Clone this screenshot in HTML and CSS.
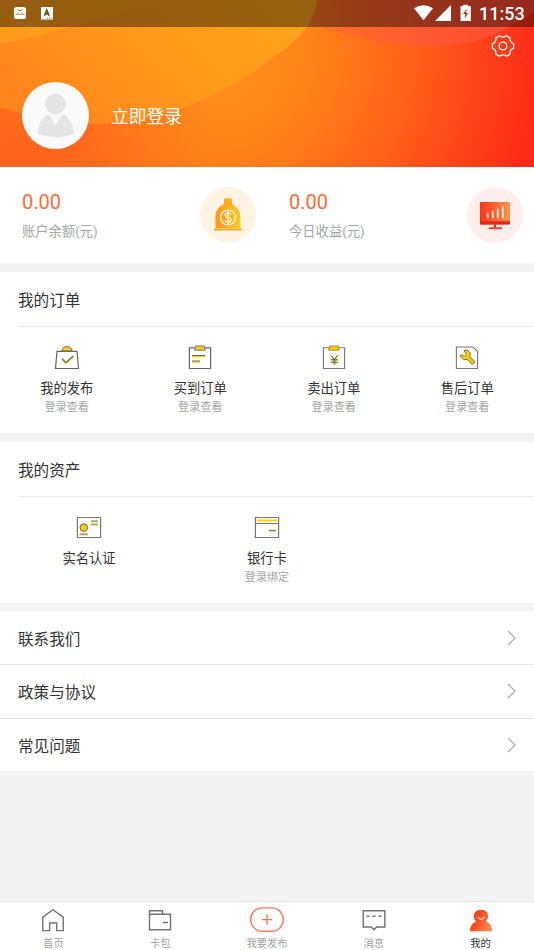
FILE: index.html
```html
<!DOCTYPE html>
<html lang="zh-CN">
<head>
<meta charset="utf-8">
<title>我的</title>
<link rel="stylesheet" href="styles.css">
</head>
<body>
<div class="app">
  <header class="hero">
    <svg class="hero-bg" viewBox="0 0 534 167" preserveAspectRatio="none">
      <defs>
        <radialGradient id="base" gradientUnits="userSpaceOnUse" cx="210" cy="50" r="335"><stop offset="0" stop-color="#ff931b"/><stop offset=".3" stop-color="#ff8419"/><stop offset=".62" stop-color="#ff5e19"/><stop offset="1" stop-color="#ff2919"/></radialGradient>
        <radialGradient id="low" gradientUnits="userSpaceOnUse" cx="20" cy="190" r="230"><stop stop-color="#ff5f1d"/><stop offset=".35" stop-color="#ff6b1c"/><stop offset="1" stop-color="#ff851a" stop-opacity="0"/></radialGradient>
        <linearGradient id="gold" x1="0" y1=".6" x2="1" y2=".2"><stop stop-color="#ff851d"/><stop offset=".5" stop-color="#ff991b"/><stop offset="1" stop-color="#ffa519"/></linearGradient>
        <linearGradient id="pink"><stop stop-color="#ff7620" stop-opacity="0"/><stop offset=".3" stop-color="#ff6a28"/><stop offset=".6" stop-color="#ff5830"/><stop offset="1" stop-color="#ff4632"/></linearGradient>
      </defs>
      <rect width="534" height="167" fill="url(#base)"/>
      <rect width="534" height="167" fill="url(#low)"/>
      <path d="M270 12C340 36 390 46 440 46C485 44 508 28 534 12V0H270Z" fill="url(#pink)"/>
      <path d="M0 0H317C314 28 292 44 267 62C242 80 208 100 178 109C150 120 118 124 94 124C55 122 28 117 0 107Z" fill="url(#gold)"/>
      <path d="M0 44C50 35 104 18 160 0H0Z" fill="#ffa51a" opacity=".65"/>
    </svg>
    <div class="status">
      <svg class="status-left" viewBox="0 0 60 20">
        <rect x="14" y="4" width="12" height="12" rx="2.5" fill="#fff"/><path d="M17.5 6.2Q20 9.5 22.5 6.2M15.2 11.2h9.6" fill="none" stroke="#9b6010"/><path d="M15.5 11.2h9" stroke="#fff" stroke-dasharray=".7 1.2"/>
        <rect x="41" y="4" width="12" height="12.5" fill="#fff"/><path d="M44.5 12.7 46.8 7 49.2 12.7M45.4 11h3" fill="none" stroke="#704407" stroke-width="1.6"/><path d="M47 15.2h5" stroke="#704407" stroke-dasharray="1 .8" stroke-width=".8"/>
      </svg>
      <svg class="status-right" viewBox="0 0 58 20">
        <path d="M0 3.3Q9.5-2.8 19 3.3L9.5 15.3Z" fill="#fff"/><path d="M21 16H37V0Z" fill="#fff"/><path d="M46.5 1H49V-.3h5V1h2.8v15H46.5Z" fill="#fff"/><path d="M52.8 3.5 49 9h2.3l-.8 4.8L54.3 8H52Z" fill="#90401b"/>
      </svg>
      <time>11:53</time>
    </div>
    <svg class="gear" viewBox="0 0 24 24"><path d="M22.6 9.9V14.1Q18.6 15.8 19.1 20.1L15.5 22.2Q12 19.6 8.5 22.2L4.9 20.1Q5.4 15.8 1.4 14.1V9.9Q5.4 8.2 4.9 3.9L8.5 1.8Q12 4.4 15.5 1.8L19.1 3.9Q18.6 8.2 22.6 9.9Z" fill="none" stroke="#fff" stroke-width="1.3" stroke-linejoin="round"/><circle cx="12" cy="12" r="3.8" fill="none" stroke="#fff" stroke-width="1.3"/></svg>
    <div class="user">
      <svg class="avatar" viewBox="0 0 67 67"><circle cx="33.5" cy="33.5" r="33.5" fill="#fafafa"/><g fill="#e4e4e4"><circle cx="33.5" cy="22" r="10.4"/><path d="M27 32.5 33.5 43.5 40.5 32.5Q51 36 51.5 52Q42 55.3 33.5 55.3Q24 55 16 52Q16 37 27 32.5Z"/></g></svg>
      <span>立即登录</span>
    </div>
  </header>

  <section class="stats">
    <div class="stat"><div><strong>0.00</strong><p>账户余额(元)</p></div>
      <svg class="stat-icon" viewBox="0 0 56 56"><defs><linearGradient id="bag"><stop stop-color="#ff971f"/><stop offset="1" stop-color="#ffc927"/></linearGradient></defs><circle cx="28" cy="28" r="28" fill="#fff4e3"/><path d="M24 11.5h8v4.3l-1 1Q40 21 40.5 29V41H15.5V29Q16 20 25 16.8l-1-1Z" fill="url(#bag)"/><path d="M14 42.4h27.5M23.5 16.4h9" stroke="#fca51f" stroke-width="2"/><circle cx="28" cy="30.5" r="7.4" fill="none" stroke="#fff5dc" stroke-width="1.3"/><path d="M31 27.5Q30.2 26 28 26Q25.2 26 25.2 28.2Q25.2 29.8 28 30.4Q31 31 31 33Q31 35.2 28 35.2Q25.8 35.2 25 33.3M28 23.8v13.4" fill="none" stroke="#fff5dc" stroke-width="1.3"/></svg>
    </div>
    <div class="stat"><div><strong>0.00</strong><p>今日收益(元)</p></div>
      <svg class="stat-icon" viewBox="0 0 56 56"><defs><linearGradient id="screen"><stop stop-color="#ff3518"/><stop offset="1" stop-color="#ff944c"/></linearGradient></defs><circle cx="28" cy="28" r="28" fill="#ffeeeb"/><path d="M28 36v5" stroke="#e72a19" stroke-width="2"/><rect x="13" y="15" width="30" height="22.4" rx="1" fill="url(#screen)"/><path d="M13 34.2H43v2.3q0 1-1 1H14q-1 0-1-1Z" fill="#e32615"/><path d="M22.5 41.2h11.7" stroke="#e64035" stroke-width="2" stroke-linecap="round"/><path d="M20.7 30.3V27.2M25.8 30.3V25M30.8 30.3V22.5M35.8 30.3V20.3" stroke="#ffe5d5" stroke-width="1.9" stroke-linecap="round"/></svg>
    </div>
  </section>

  <section class="panel">
    <h2>我的订单</h2>
    <div class="grid four">
      <div class="item"><svg viewBox="0 0 26 26"><path d="M7.8 6Q8.5 1.5 13 1.5T18.2 6Z" fill="#ffcb08" stroke="#777"/><path d="M3 6.3H23L24.5 23.5H1.5Z" fill="#fff" stroke="#666" stroke-width="1.2"/><path d="m8 14.7 3.9 3.8 7.3-6.5" fill="none" stroke="#ffcb08" stroke-width="1.2"/><path d="m8 13.7 3.9 3.8 7.3-6.5" fill="none" stroke="#666" stroke-width="1.2"/></svg><b>我的发布</b><small>登录查看</small></div>
      <div class="item"><svg viewBox="0 0 26 26"><path d="M2.4 2.8H23.6V23.5H2.4Z" fill="#fff" stroke="#666" stroke-width="1.2"/><path d="M8.7 1h8.6l1 4.2H7.5Z" fill="#ffcb08" stroke="#777"/><path d="M5 11.5h13M5 17h8" stroke="#ffcb08" stroke-width="1.3"/><path d="M5 10.5h13M5 16h8" stroke="#666"/></svg><b>买到订单</b><small>登录查看</small></div>
      <div class="item"><svg viewBox="0 0 26 26"><path d="M2.4 2.8H23.6V23.5H2.4Z" fill="#fff" stroke="#777" stroke-width="1.1"/><path d="M8.7 1h8.6l1 4.2H7.5Z" fill="#ffcb08" stroke="#997b20" stroke-width=".8"/><path d="m11 10.5 3.2 4.5 3.2-4.5M10.5 15h7.3M10.5 17.5h7.3M14.2 15v5" fill="none" stroke="#ffcb08"/><path d="m10 10.2 3.2 4.5 3.2-4.5M9.7 14.8h7M9.7 17.2h7M13.2 14.8v5" fill="none" stroke="#555"/></svg><b>卖出订单</b><small>登录查看</small></div>
      <div class="item"><svg viewBox="0 0 26 26"><path d="M2.4 2H19L23.6 6.5V23.5H2.4Z" fill="#fff" stroke="#777" stroke-width="1.1"/><path d="M10 5.6 12.8 4.8 16.3 8.2 15.8 11.6 21 16.8 18.3 19.5 13 14.3 9.7 14.8 6.2 11.5 7.3 9.8 10.2 11.4 12.3 9.2Z" fill="#ffcb08" stroke="#806d30" stroke-width="1" stroke-linejoin="round"/></svg><b>售后订单</b><small>登录查看</small></div>
    </div>
  </section>

  <section class="panel">
    <h2>我的资产</h2>
    <div class="grid three">
      <div class="item"><svg viewBox="0 0 26 26"><path d="M1.4 2.5H24.6V22.5H1.4Z" fill="#fff" stroke="#777" stroke-width="1.2"/><circle cx="7.8" cy="12.6" r="3.8" fill="#ffcb08" stroke="#6d6339"/><path d="M15 6.8h7M15 10h7M3.5 19.8h8.3" stroke="#ffcb08" stroke-width="1.2"/><path d="M15 6h7M15 9.2h7M3.5 19h8.3" stroke="#777"/></svg><b>实名认证</b></div>
      <div class="item"><svg viewBox="0 0 26 26"><path d="M1.4 2.5H24.6V22.5H1.4ZM1.4 8.5H24.6" fill="#fff" stroke="#777" stroke-width="1.2"/><path d="M3 5.5h20" stroke="#ffcb08" stroke-width="2"/><path d="M15 16.2h7" stroke="#ffcb08"/><path d="M15 15.3h7" stroke="#666"/></svg><b>银行卡</b><small>登录绑定</small></div>
    </div>
  </section>

  <nav class="links">
    <div class="link"><span>联系我们</span><svg viewBox="0 0 9 16"><path d="m1 1 7 7-7 7"/></svg></div>
    <div class="link"><span>政策与协议</span><svg viewBox="0 0 9 16"><path d="m1 1 7 7-7 7"/></svg></div>
    <div class="link"><span>常见问题</span><svg viewBox="0 0 9 16"><path d="m1 1 7 7-7 7"/></svg></div>
  </nav>

  <footer class="tabs">
    <div class="tab"><svg viewBox="0 0 36 26"><path d="M7.8 23.6V10.2L18 2.8 28.2 10.2V23.6H21.7V16H14.6V23.6Z"/></svg><span>首页</span></div>
    <div class="tab"><svg viewBox="0 0 36 26"><path d="M7.5 7.2H28.5V22.7H7.5V3.8H20.5V7M21 15.5h5"/></svg><span>卡包</span></div>
    <div class="tab publish"><svg viewBox="0 0 36 26"><rect x="1.7" y=".9" width="32.6" height="23.4" rx="11.7"/><path d="M12.8 12.6h10.4M18 7.4v10.4"/></svg><span>我要发布</span></div>
    <div class="tab"><svg viewBox="0 0 36 26"><path d="M7.2 3.7H28.8V20H20.7L18 22.7 15.3 20H7.2ZM10.5 9.3h3M16.5 9.3h3M22.5 9.3h3"/></svg><span>消息</span></div>
    <div class="tab active"><svg viewBox="0 0 36 26"><defs><linearGradient id="me" x1="0" y1=".2" x2="1" y2=".7"><stop stop-color="#ff3d1a"/><stop offset=".4" stop-color="#ff4d22"/><stop offset="1" stop-color="#ff8d4d"/></linearGradient></defs><path d="M18 2.8C25.5 2.8 27 10 23 14.5Q29 17 29.2 24.3H6.8Q7 17 13 14.5C9 10 10.5 2.8 18 2.8Z" class="person"/><path d="M14.8 10Q18 14.5 21.2 10" class="smile"/></svg><span>我的</span></div>
  </footer>
</div>
</body>
</html>
```
FILE: styles.css
```css
* { box-sizing: border-box; }
body { margin: 0; background: #f3f3f3; color: #333; font-family: Roboto, "Noto Sans CJK SC", sans-serif; }
svg { display: block; flex: none; }
p, h2 { margin: 0; font-weight: 400; }
.app { height: 950px; display: flex; flex-direction: column; overflow: hidden; }
.hero { position: relative; height: 167px; flex: none; display: flex; flex-direction: column; color: #fff; }
.hero-bg { position: absolute; inset: 0; width: 534px; height: 167px; z-index: -1; }
.status { height: 27px; flex: none; display: flex; align-items: center; background: rgba(0, 0, 0, .41); }
.status-left { width: 60px; height: 20px; margin-top: -1px; }
.status-right { width: 58px; height: 20px; margin: 2px 7px 0 auto; overflow: visible; }
.status time { width: 55px; font-size: 18px; font-weight: 500; line-height: 27px; }
.gear { width: 24px; height: 24px; margin: 7px 19px 0 auto; }
.user { display: flex; align-items: center; gap: 22px; margin: 24px 0 0 22px; font-size: 17.8px; }
.user span { margin-top: -2px; }
.avatar { width: 67px; height: 67px; }
.stats { height: 96px; flex: none; display: flex; background: #fff; }
.stat { flex: 1; display: flex; justify-content: space-between; padding: 20px 11px 0 22px; }
.stat strong { display: block; font-size: 20px; line-height: 30px; font-weight: 400; color: #ff6c3b; }
.stat p { font-size: 13.3px; line-height: 20px; margin-top: 5px; color: #a5a5a5; }
.stat-icon { width: 56px; height: 56px; }
.panel { height: 161px; margin-top: 9px; flex: none; background: #fff; }
.panel h2 { height: 55px; margin-left: 18px; border-bottom: 1px solid #ececec; font-size: 15.6px; line-height: 59px; }
.grid { display: grid; padding-top: 18px; }
.four { grid-template-columns: repeat(4, 1fr); }
.three { grid-template-columns: repeat(3, 1fr); }
.item { display: flex; flex-direction: column; align-items: center; }
.item svg { width: 26px; height: 26px; }
.item b { font-size: 13.3px; line-height: 20px; margin-top: 8px; font-weight: 400; }
.item small { font-size: 11.1px; line-height: 18px; color: #a5a5a5; }
.links { margin-top: 8px; padding-top: 1px; flex: none; background: #fff; }
.link { height: 52px; display: flex; align-items: center; justify-content: space-between; padding: 0 18px; font-size: 15.6px; }
.link + .link { border-top: 1px solid #e7e7e7; height: 53.5px; }
.link svg { width: 9px; height: 16px; fill: none; stroke: #aaa; stroke-width: 1.2; }
.tabs { margin-top: auto; height: 49px; flex: none; display: flex; background: #fff; border-top: 1px solid #e6e6e6; }
.tab { flex: 1; display: flex; flex-direction: column; align-items: center; padding-top: 5px; color: #a2a2a2; font-size: 10.3px; line-height: 16px; }
.tab svg { width: 36px; height: 26px; fill: none; stroke: #727272; stroke-width: 1.4; }
.tab span { margin-top: 3px; }
.publish svg { stroke: #f9744d; }
.active { color: #333; }
.tab .person { fill: url(#me); stroke: none; }
.tab .smile { stroke: #fff; stroke-width: 1.2; }
```
